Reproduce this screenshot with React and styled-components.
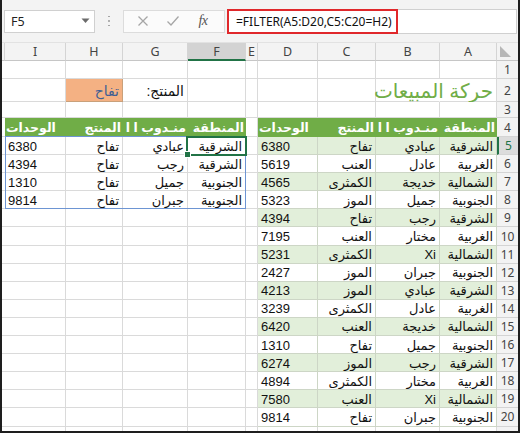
import React from 'react';
import styled, { createGlobalStyle } from 'styled-components';

const GlobalStyle = createGlobalStyle`
  html, body { margin: 0; padding: 0; background: #fff; }
  body { width: 520px; height: 433px; overflow: hidden; }
`;

const Frame = styled.div`
  width: 520px;
  height: 433px;
  box-sizing: border-box;
  border-left: 2px solid #1e1e1e;
  border-right: 2px solid #1e1e1e;
  border-bottom: 2px solid #1e1e1e;
  display: flex;
  flex-direction: column;
  overflow: hidden;
  background: #fff;
`;

const FormulaBar = styled.div`
  height: 43px;
  flex: none;
  box-sizing: border-box;
  background: #f3f3f3;
  display: flex;
  align-items: center;
  padding: 0 1px 0 2px;
  border-bottom: 1px solid #e2e2e2;
`;

const NameBox = styled.div`
  width: 91px;
  height: 23px;
  box-sizing: border-box;
  background: #fff;
  border: 1px solid #d0d0d0;
  display: flex;
  align-items: center;
  justify-content: space-between;
  padding: 0 4px 0 6px;
  font-family: "Noto Sans", "Open Sans", sans-serif;
  font-size: 12.5px;
  color: #222;
`;

const Separator = styled.div`
  width: 28px;
  display: flex;
  flex-direction: column;
  align-items: center;
  gap: 3px;
`;

const Dot = styled.span`
  width: 1.5px;
  height: 1.5px;
  background: #9a9a9a;
  border-radius: 1px;
`;

const ButtonGroup = styled.div`
  width: 102px;
  height: 23px;
  box-sizing: border-box;
  background: #fbfbfb;
  border: 1px solid #dcdcdc;
  display: flex;
  align-items: center;
  justify-content: space-around;
  padding: 0 6px 0 4px;
  margin-right: 2px;
`;

const IconButton = styled.span`
  width: 26px;
  display: flex;
  align-items: center;
  justify-content: center;
`;

const FxLabel = styled.span`
  font-family: "Liberation Serif", serif;
  font-style: italic;
  font-size: 14px;
  color: #555;
  letter-spacing: -0.5px;
`;

const FormulaInput = styled.div`
  flex: 1;
  height: 25px;
  box-sizing: border-box;
  background: #fff;
  border: 1px solid #d0d0d0;
  display: flex;
  align-items: stretch;
`;

const FormulaHighlight = styled.div`
  border: 2px solid #e0282b;
  box-sizing: border-box;
  margin: -1px 0 -1px -1px;
  padding: 0 4px 0 7px;
  display: flex;
  align-items: center;
  font-family: "Noto Sans", "Open Sans", sans-serif;
  font-size: 12px;
  color: #111;
  white-space: nowrap;
`;

const Sheet = styled.div`
  flex: 1;
  display: grid;
  grid-template-columns: 3px 61px 57px 65px 58px 12px 60px 58px 64px 57px 21px;
  grid-template-rows: 18px 18px 23px 16px 19px repeat(16, 18.1px) 6px;
  overflow: hidden;
`;

const Cell = styled.div`
  grid-row: ${p => p.$r};
  grid-column: ${p => p.$c};
  box-sizing: border-box;
  min-width: 0;
  background: ${p => p.$fill || '#fff'};
  border-right: 1px solid ${p => (p.$noRight ? 'transparent' : p.$line || '#dadada')};
  border-bottom: 1px solid ${p => (p.$noBottom ? 'transparent' : p.$line || '#dadada')};
  direction: rtl;
  display: flex;
  align-items: center;
  justify-content: ${p => (p.$align === 'end' ? 'flex-end' : 'flex-start')};
  padding: 1px ${p => (p.$tight ? 1 : 3)}px 0 ${p => (p.$tight ? 1 : 3)}px;
  white-space: nowrap;
  overflow: ${p => (p.$overflow ? 'visible' : 'hidden')};
  font-family: "Liberation Sans", "DejaVu Sans", sans-serif;
  font-size: ${p => p.$size || 13}px;
  font-weight: ${p => (p.$bold ? 700 : 400)};
  color: ${p => p.$color || '#111'};
`;

const ColHeader = styled.div`
  grid-row: 1;
  grid-column: ${p => p.$c};
  box-sizing: border-box;
  background: ${p => (p.$selected ? '#d3d3d3' : '#f3f3f3')};
  border-right: 1px solid #d4d4d4;
  border-bottom: ${p => (p.$selected ? '2px solid #217346' : '1px solid #c6c6c6')};
  display: flex;
  align-items: center;
  justify-content: center;
  font-family: "Noto Sans", "Open Sans", sans-serif;
  font-size: 12.5px;
  color: #444;
  overflow: hidden;
`;

const RowHeader = styled.div`
  grid-row: ${p => p.$r};
  grid-column: 11;
  box-sizing: border-box;
  background: ${p => (p.$selected ? '#dcdcdc' : '#f3f3f3')};
  border-bottom: 1px solid #d4d4d4;
  border-left: ${p => (p.$selected ? '2px solid #217346' : 'none')};
  display: flex;
  align-items: center;
  justify-content: center;
  font-family: "Noto Sans", "Open Sans", sans-serif;
  font-size: 12px;
  color: ${p => (p.$selected ? '#217346' : '#444')};
  overflow: hidden;
`;

const Corner = styled.div`
  grid-row: 1;
  grid-column: 11;
  box-sizing: border-box;
  background: #f3f3f3;
  border-bottom: 1px solid #c6c6c6;
  display: flex;
  align-items: flex-end;
  justify-content: flex-start;
  padding: 0 0 3px 3px;
`;

const SpillOutline = styled.div`
  grid-row: 6 / 10;
  grid-column: 2 / 6;
  margin: -1px 0 0 0;
  border: 1px solid #6d95d3;
  pointer-events: none;
`;

const Selection = styled.div`
  grid-row: 6;
  grid-column: 5;
  margin: -1px -1px -1px -2px;
  border: 2px solid #217346;
  position: relative;
  pointer-events: none;
`;

const FillHandle = styled.span`
  position: absolute;
  left: -4px;
  bottom: -4px;
  width: 5px;
  height: 5px;
  background: #217346;
  border: 1px solid #fff;
`;

const regionData = [
  ['الشرقية', 'عبادي', 'تفاح', '6380'],
  ['الغربية', 'عادل', 'العنب', '5619'],
  ['الشمالية', 'خديجة', 'الكمثرى', '4565'],
  ['الجنوبية', 'جميل', 'الموز', '5323'],
  ['الشرقية', 'رجب', 'تفاح', '4394'],
  ['الغربية', 'مختار', 'العنب', '7195'],
  ['الشمالية', 'Xi', 'الكمثرى', '5231'],
  ['الجنوبية', 'جبران', 'الموز', '2427'],
  ['الشرقية', 'عبادي', 'الموز', '4213'],
  ['الغربية', 'عادل', 'الكمثرى', '3239'],
  ['الشمالية', 'خديجة', 'العنب', '6420'],
  ['الجنوبية', 'جميل', 'تفاح', '1310'],
  ['الشرقية', 'رجب', 'الموز', '6274'],
  ['الغربية', 'مختار', 'الكمثرى', '4894'],
  ['الشمالية', 'Xi', 'العنب', '7580'],
  ['الجنوبية', 'جبران', 'تفاح', '9814'],
];

const filtered = regionData.filter(r => r[2] === 'تفاح');

const headers = ['المنطقة', 'منـدوب ا ا', 'المنتج', 'الوحدات'];

const GREEN = '#70ad47';
const LIGHT_GREEN = '#e2efda';

const colOf = { pad: 1, I: 2, H: 3, G: 4, F: 5, E: 6, D: 7, C: 8, B: 9, A: 10 };
const letters = ['I', 'H', 'G', 'F', 'E', 'D', 'C', 'B', 'A'];

function buildCells() {
  const map = {};
  const set = (row, col, props) => {
    map[`${row}-${col}`] = props;
  };
  set(2, colOf.A, { text: 'حركة المبيعات', size: 20, color: GREEN, overflow: true });
  set(2, colOf.B, { noRight: true });
  set(2, colOf.G, { text: 'المنتج:', size: 14 });
  set(2, colOf.H, { text: 'تفاح', size: 14, color: '#3e5f94', fill: '#f4b183', line: '#c9a07a' });
  const rightCols = [colOf.A, colOf.B, colOf.C, colOf.D];
  const leftCols = [colOf.F, colOf.G, colOf.H, colOf.I];
  [rightCols, leftCols].forEach(cols => {
    cols.forEach((c, i) => {
      set(4, c, {
        text: headers[i],
        fill: GREEN,
        line: GREEN,
        color: '#fff',
        bold: true,
        tight: true,
        size: 12.5,
        align: i === 3 ? 'end' : 'start',
      });
    });
  });
  regionData.forEach((r, idx) => {
    const row = 5 + idx;
    const odd = idx % 2 === 0;
    rightCols.forEach((c, i) => {
      set(row, c, {
        text: r[i],
        fill: odd ? LIGHT_GREEN : '#fff',
        line: '#cdd6c6',
        align: i === 3 ? 'end' : 'start',
      });
    });
  });
  filtered.forEach((r, idx) => {
    const row = 5 + idx;
    leftCols.forEach((c, i) => {
      set(row, c, { text: r[i], align: i === 3 ? 'end' : 'start' });
    });
  });
  return map;
}

const cellMap = buildCells();

const sheetRows = Array.from({ length: 21 }, (_, i) => i + 1);

export default function App() {
  return (
    <>
      <GlobalStyle />
      <Frame>
        <FormulaBar>
          <NameBox>
            <span>F5</span>
            <svg width="9" height="6" viewBox="0 0 9 6">
              <polygon points="0.5,0.5 8.5,0.5 4.5,5" fill="#6b6b6b" />
            </svg>
          </NameBox>
          <Separator>
            <Dot />
            <Dot />
            <Dot />
          </Separator>
          <ButtonGroup>
            <IconButton>
              <svg width="12" height="12" viewBox="0 0 12 12">
                <path d="M1.5 1.5 L10.5 10.5 M10.5 1.5 L1.5 10.5" stroke="#a6a6a6" strokeWidth="1.3" fill="none" />
              </svg>
            </IconButton>
            <IconButton>
              <svg width="14" height="12" viewBox="0 0 14 12">
                <path d="M1.5 6.5 L5 10 L12.5 1.5" stroke="#a6a6a6" strokeWidth="1.3" fill="none" />
              </svg>
            </IconButton>
            <IconButton>
              <FxLabel>fx</FxLabel>
            </IconButton>
          </ButtonGroup>
          <FormulaInput>
            <FormulaHighlight>=FILTER(A5:D20,C5:C20=H2)</FormulaHighlight>
          </FormulaInput>
        </FormulaBar>
        <Sheet>
          <ColHeader $c={1} />
          {letters.map(l => (
            <ColHeader key={l} $c={colOf[l]} $selected={l === 'F'}>
              {l}
            </ColHeader>
          ))}
          <Corner>
            <svg width="11" height="11" viewBox="0 0 11 11">
              <polygon points="0,0 0,11 11,11" fill="#b7b7b7" />
            </svg>
          </Corner>
          {sheetRows.map(row => (
            <React.Fragment key={row}>
              {Array.from({ length: 10 }, (_, k) => k + 1).map(c => {
                const p = cellMap[`${row}-${c}`] || {};
                return (
                  <Cell
                    key={c}
                    $r={row + 1}
                    $c={c}
                    $fill={p.fill}
                    $line={p.line}
                    $noRight={p.noRight}
                    $noBottom={row === 21}
                    $align={p.align}
                    $bold={p.bold}
                    $tight={p.tight}
                    $color={p.color}
                    $size={p.size}
                    $overflow={p.overflow}
                  >
                    {p.text}
                  </Cell>
                );
              })}
              <RowHeader $r={row + 1} $selected={row === 5}>
                {row <= 20 ? row : ''}
              </RowHeader>
            </React.Fragment>
          ))}
          <SpillOutline />
          <Selection>
            <FillHandle />
          </Selection>
        </Sheet>
      </Frame>
    </>
  );
}
